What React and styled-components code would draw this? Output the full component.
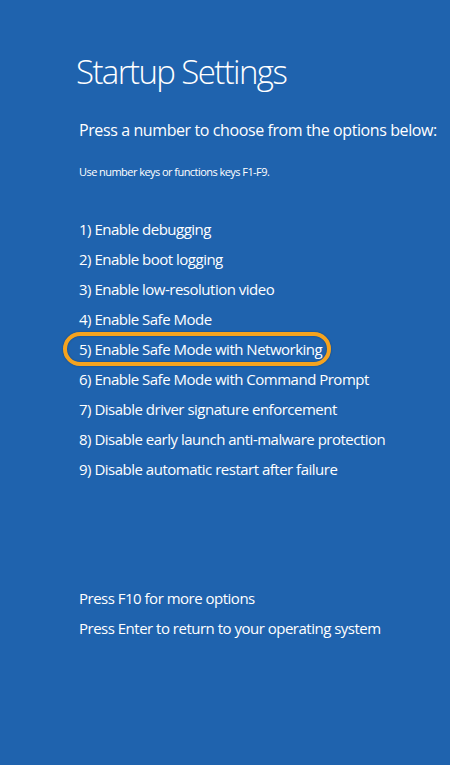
import React from "react";
import styled, { createGlobalStyle } from "styled-components";

const BACKGROUND = "#1f63ae";
const HIGHLIGHT = "#f5a31f";

const OPTIONS = [
  "Enable debugging",
  "Enable boot logging",
  "Enable low-resolution video",
  "Enable Safe Mode",
  "Enable Safe Mode with Networking",
  "Enable Safe Mode with Command Prompt",
  "Disable driver signature enforcement",
  "Disable early launch anti-malware protection",
  "Disable automatic restart after failure",
];

const SELECTED = 5;

const GlobalStyle = createGlobalStyle`
  html, body {
    margin: 0;
    padding: 0;
    background: ${BACKGROUND};
  }
`;

export default function App() {
  return (
    <>
      <GlobalStyle />
      <Screen>
        <Title>Startup Settings</Title>
        <Lead>Press a number to choose from the options below:</Lead>
        <Hint>Use number keys or functions keys F1-F9.</Hint>
        <OptionList>
          {OPTIONS.map((label, i) => (
            <Option key={label} $selected={i + 1 === SELECTED}>
              {i + 1}) {label}
            </Option>
          ))}
        </OptionList>
        <Footer>
          <Line>Press F10 for more options</Line>
          <Line>Press Enter to return to your operating system</Line>
        </Footer>
      </Screen>
    </>
  );
}

const Screen = styled.div`
  width: 450px;
  height: 765px;
  box-sizing: border-box;
  padding: 50px 0 0 79px;
  background: ${BACKGROUND};
  color: #ffffff;
  font-family: "Open Sans", "Noto Sans", sans-serif;
  display: flex;
  flex-direction: column;
`;

const Title = styled.h1`
  margin: 0 0 0 -3px;
  font-size: 33px;
  font-weight: 300;
  line-height: 44px;
  letter-spacing: -1.6px;
`;

const Lead = styled.p`
  margin: 25px 0 0 0;
  font-size: 16px;
  line-height: 22px;
  letter-spacing: -0.4px;
`;

const Hint = styled.p`
  margin: 23px 0 0 0;
  font-size: 11px;
  line-height: 16px;
  letter-spacing: -0.55px;
`;

const OptionList = styled.ul`
  list-style: none;
  margin: 34px 0 0 0;
  padding: 0;
  display: flex;
  flex-direction: column;
`;

const Option = styled.li`
  position: relative;
  font-size: 15px;
  line-height: 30px;
  letter-spacing: -0.5px;

  &::before {
    content: "";
    display: ${(p) => (p.$selected ? "block" : "none")};
    position: absolute;
    left: -16px;
    top: -2px;
    width: 260px;
    height: 26px;
    border: 4px solid ${HIGHLIGHT};
    border-radius: 17px;
    box-shadow: 0 0 2px rgba(0, 0, 0, 0.35), inset 0 0 2px rgba(0, 0, 0, 0.35);
  }
`;

const Footer = styled.div`
  margin-top: 99px;
  display: flex;
  flex-direction: column;
`;

const Line = styled.p`
  margin: 0;
  font-size: 15px;
  line-height: 30px;
  letter-spacing: -0.5px;
`;
